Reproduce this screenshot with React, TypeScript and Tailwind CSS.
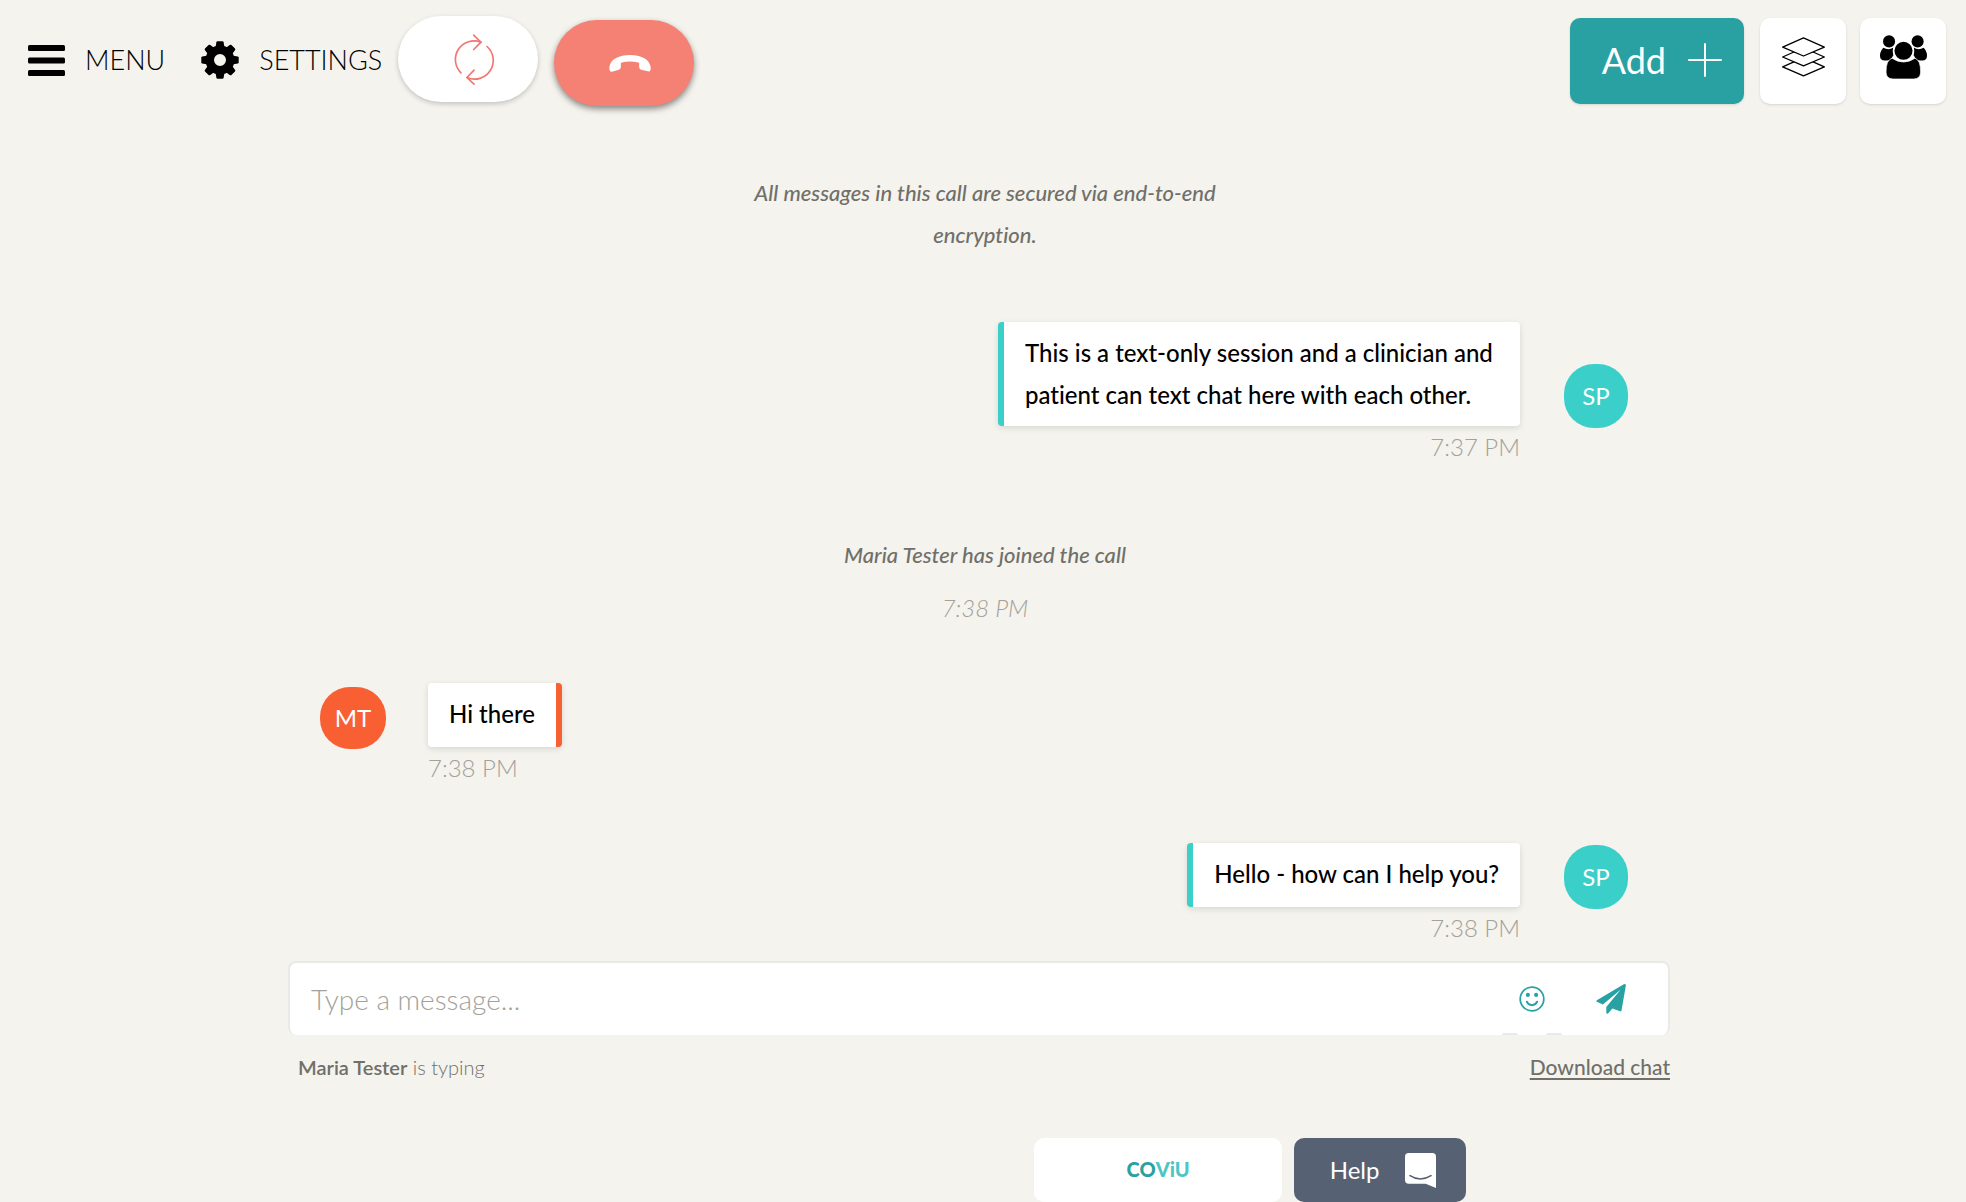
import type { ReactNode } from "react"
import { clsx } from "clsx"

type Message =
  | { kind: "system"; text: string; time?: string }
  | { kind: "sent" | "received"; initials: string; text: string; time: string }

const messages: Message[] = [
  { kind: "system", text: "All messages in this call are secured via end-to-end encryption." },
  {
    kind: "sent",
    initials: "SP",
    text: "This is a text-only session and a clinician and patient can text chat here with each other.",
    time: "7:37 PM",
  },
  { kind: "system", text: "Maria Tester has joined the call", time: "7:38 PM" },
  { kind: "received", initials: "MT", text: "Hi there", time: "7:38 PM" },
  { kind: "sent", initials: "SP", text: "Hello - how can I help you?", time: "7:38 PM" },
]

function MenuIcon() {
  return (
    <svg width="37" height="31" viewBox="0 0 37 31" aria-hidden="true">
      <rect width="37" height="6" rx="1.5" />
      <rect y="12.5" width="37" height="6" rx="1.5" />
      <rect y="25" width="37" height="6" rx="1.5" />
    </svg>
  )
}

function GearIcon() {
  return (
    <svg width="38" height="38" viewBox="-19 -19 38 38" aria-hidden="true">
      <circle r="10.2" fill="none" stroke="black" strokeWidth="8.4" />
      {[0, 45, 90, 135, 180, 225, 270, 315].map((angle) => (
        <path
          key={angle}
          transform={`rotate(${angle})`}
          d="M-4.6 -12 L-3.6 -17.8 Q-3.4 -18.7 -2.5 -18.7 H2.5 Q3.4 -18.7 3.6 -17.8 L4.6 -12Z"
        />
      ))}
    </svg>
  )
}

function RefreshIcon() {
  return (
    <svg
      width="42"
      height="53"
      viewBox="0 0 126 158"
      fill="none"
      stroke="#f3766f"
      strokeWidth="5"
      strokeLinecap="round"
      aria-hidden="true"
    >
      <path d="M24 119A56 56 0 0 1 84 27" />
      <path d="M62 6L84 27L62 49" />
      <path d="M102 40A56 56 0 0 1 42 133" />
      <path d="M63 111L42 133L63 153" />
    </svg>
  )
}

function HangUpIcon() {
  return (
    <svg width="42" height="17" viewBox="0 0 126 52" fill="white" aria-hidden="true">
      <path d="M0 36C4 12 30 0 63 0C96 0 122 12 126 36V44Q125 52 118 50L97 45Q91 43 91 37V24Q63 16 35 24V37Q35 43 29 45L8 51Q1 52 0 44Z" />
    </svg>
  )
}

function LayersIcon() {
  return (
    <svg
      width="43"
      height="40"
      viewBox="0 0 130 120"
      fill="white"
      stroke="black"
      strokeWidth="4"
      strokeLinejoin="round"
      aria-hidden="true"
    >
      <path d="M65 62L128 90L65 117L2 90Z" />
      <path d="M65 32L128 60L65 87L2 60Z" />
      <path d="M65 2L128 30L65 57L2 30Z" />
    </svg>
  )
}

function PeopleIcon() {
  return (
    <svg width="47" height="44" viewBox="0 0 140 131" aria-hidden="true">
      <circle cx="27" cy="19" r="18" />
      <circle cx="112" cy="19" r="18" />
      <path d="M10 38Q26 47 40 37V60Q36 66 32 72Q28 76 20 76H14Q0 76 0 62Q0 48 10 38Z" />
      <path d="M130 38Q114 47 100 37V60Q104 66 108 72Q112 76 120 76H126Q140 76 140 62Q140 48 130 38Z" />
      <path
        d="M36 69Q70 92 104 69Q121 74 121 110Q121 131 100 131H39Q18 131 18 110Q18 74 36 69Z"
        stroke="white"
        strokeWidth="2"
      />
      <circle cx="70" cy="47" r="29.5" stroke="white" strokeWidth="5" />
    </svg>
  )
}

function SmileIcon() {
  return (
    <svg width="26" height="26" viewBox="0 0 76 76" aria-hidden="true">
      <circle cx="38" cy="38" r="34.5" fill="none" stroke="#29a1a2" strokeWidth="5" />
      <circle cx="26" cy="26" r="6" fill="#29a1a2" />
      <circle cx="50" cy="26" r="6" fill="#29a1a2" />
      <path d="M23 46Q27 56 38 56Q49 56 53 46" fill="none" stroke="#29a1a2" strokeWidth="6" strokeLinecap="round" />
    </svg>
  )
}

function SendIcon() {
  return (
    <svg width="30" height="30" viewBox="0 0 88 89" fill="#29a1a2" aria-hidden="true">
      <path d="M85 0Q89 1 88 5L75 79Q74 82 71 81L48 73L36 87Q34 89 32 88Q30 87 30 85V68L73 16L20 61L2 53Q-1 51 2 48L82 1Z" />
    </svg>
  )
}

function HelpIcon() {
  return (
    <svg width="31" height="35" viewBox="0 0 93 105" aria-hidden="true">
      <path d="M11 0H82Q93 0 93 11V105L62 92H11Q0 92 0 81V11Q0 0 11 0Z" fill="white" />
      <path d="M15 68Q46 88 78 68" fill="none" stroke="#566273" strokeWidth="5" strokeLinecap="round" />
    </svg>
  )
}

function TileButton({ label, children }: { label: string; children: ReactNode }) {
  return (
    <button
      type="button"
      aria-label={label}
      className="flex size-[86px] items-center justify-center rounded-[10px] bg-white pb-2 shadow-sm"
    >
      {children}
    </button>
  )
}

function Header() {
  return (
    <header className="flex items-start justify-between pr-5 pl-7">
      <div className="flex items-start">
        <nav className="flex h-30 items-center gap-9">
          <button type="button" className="flex items-center gap-5 text-[27px] font-light">
            <MenuIcon />
            MENU
          </button>
          <button type="button" className="flex items-center gap-5 text-[27px] font-light">
            <GearIcon />
            SETTINGS
          </button>
        </nav>
        <button
          type="button"
          aria-label="Refresh call"
          className="mt-4 ml-4 flex h-[86px] w-[140px] items-center justify-center rounded-[43px] bg-white pl-3 shadow-[0_2px_5px_rgba(0,0,0,0.2)]"
        >
          <RefreshIcon />
        </button>
        <button
          type="button"
          aria-label="End call"
          className="mt-5 ml-4 flex h-[86px] w-[140px] items-center justify-center rounded-[43px] bg-[#f58074] pl-3 shadow-[0_3px_6px_rgba(0,0,0,0.45)]"
        >
          <HangUpIcon />
        </button>
      </div>

      <div className="flex gap-[14px] pt-[18px]">
        <button
          type="button"
          className="mr-0.5 flex h-[86px] items-center gap-[22px] rounded-[10px] bg-[#29a1a2] pr-[22px] pb-0.5 pl-8 text-4xl text-white shadow-sm"
        >
          Add
          <svg width="34" height="34" viewBox="0 0 34 34" stroke="white" strokeWidth="2" strokeLinecap="round" aria-hidden="true">
            <path d="M17 1V33M1 17H33" />
          </svg>
        </button>
        <TileButton label="Layers">
          <LayersIcon />
        </TileButton>
        <TileButton label="Participants">
          <PeopleIcon />
        </TileButton>
      </div>
    </header>
  )
}

function SystemMessage({ text, time }: { text: string; time?: string }) {
  return (
    <li className={clsx("flex flex-col items-center gap-[11px] pt-3 pl-3 text-center italic", !time && "pb-3")}>
      <p className="max-w-[480px] text-[22px] leading-[42px] font-medium text-[#706f69]">{text}</p>
      {time && <time className="text-2xl leading-[42px] font-light text-[#a3a199]">{time}</time>}
    </li>
  )
}

function ChatMessage({ kind, initials, text, time }: Exclude<Message, { kind: "system" }>) {
  const sent = kind === "sent"
  return (
    <li className={clsx("flex", sent ? "flex-row-reverse gap-11 pr-[42px]" : "gap-[42px] pl-8")}>
      <div
        className={clsx(
          "mb-10 flex shrink-0 items-center justify-center self-end rounded-[30px] text-2xl text-white",
          sent ? "size-16 bg-[#3acfc8]" : "h-[62px] w-[66px] bg-[#f85f32]",
        )}
      >
        {initials}
      </div>
      <div className={clsx("flex flex-col", sent ? "items-end" : "items-start")}>
        <p
          className={clsx(
            "min-h-16 max-w-[522px] rounded-[4px] bg-white px-[21px] py-2.5 text-2xl leading-[42px] font-medium shadow-[0_2px_6px_rgba(0,0,0,0.12)]",
            sent ? "border-l-6 border-[#3acfc8]" : "border-r-6 border-[#f85f32]",
          )}
        >
          {text}
        </p>
        <time className="text-2xl leading-[42px] font-light text-[#a3a199]">{time}</time>
      </div>
    </li>
  )
}

function Composer() {
  return (
    <form>
      <div className="relative flex h-[74px] items-center overflow-hidden rounded-lg border-2 border-b-0 border-[#e9e9e7] bg-white pr-[42px] pl-[21px]">
        <input
          type="text"
          aria-label="Message"
          placeholder="Type a message..."
          className="min-w-0 flex-1 text-[28px] font-light outline-none placeholder:text-[#a3a199]"
        />
        <button type="button" aria-label="Insert emoji">
          <SmileIcon />
        </button>
        <button type="submit" aria-label="Send message" className="ml-[51px]">
          <SendIcon />
        </button>
        <span className="absolute right-[150px] bottom-0 h-[2px] w-4 rounded-t-full bg-[#e9e9e7]" />
        <span className="absolute right-[106px] bottom-0 h-[2px] w-4 rounded-t-full bg-[#e9e9e7]" />
      </div>
      <div className="flex justify-between pt-4 pl-2.5 leading-8 text-[#706f69]">
        <p className="text-xl leading-8 font-light">
          <strong className="font-semibold">Maria Tester</strong> is typing
        </p>
        <a href="#download" className="text-[21px] leading-8 font-medium underline decoration-2 underline-offset-3">
          Download chat
        </a>
      </div>
    </form>
  )
}

function Footer() {
  return (
    <footer className="mt-auto flex gap-3 pl-[52.6%]">
      <div className="flex h-16 w-[248px] items-center justify-center rounded-[10px] bg-white pb-0.5 text-xl font-black text-[#29a1a2]">
        CO<span className="text-[#4ec5c5]">ViU</span>
      </div>
      <button
        type="button"
        className="flex h-16 w-[172px] items-center justify-center gap-[26px] rounded-[10px] bg-[#566273] pl-1.5 text-2xl text-white"
      >
        Help
        <HelpIcon />
      </button>
    </footer>
  )
}

export default function App() {
  return (
    <div className="flex min-h-screen flex-col bg-[#f4f3ee] font-['Lato',sans-serif] text-black [font-variant-ligatures:none]">
      <Header />
      <main className="pt-10 pr-[296px] pl-72">
        <ul className="mb-3 flex flex-col gap-[54px]">
          {messages.map((message, index) =>
            message.kind === "system" ? (
              <SystemMessage key={index} {...message} />
            ) : (
              <ChatMessage key={index} {...message} />
            ),
          )}
        </ul>
        <Composer />
      </main>
      <Footer />
    </div>
  )
}
